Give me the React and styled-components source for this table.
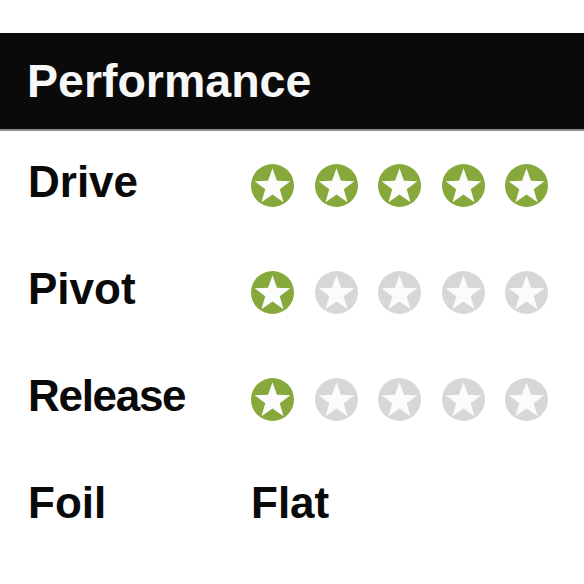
import React from "react";
import styled, { createGlobalStyle } from "styled-components";

const Global = createGlobalStyle`
  html, body { margin: 0; padding: 0; background: #ffffff; }
  body { font-family: "Liberation Sans", Arial, sans-serif; }
`;

const Page = styled.div`
  width: 584px;
  padding-top: 33px;
`;

const Header = styled.header`
  height: 96px;
  background: #0a0a0a;
  border-bottom: 2px solid #8c8c8c;
  display: flex;
  align-items: center;
  padding-left: 27px;
  box-sizing: content-box;
`;

const Title = styled.h1`
  margin: 0;
  color: #f7f7f7;
  font-size: 46.5px;
  font-weight: 700;
  line-height: 1;
  padding-top: 1px;
`;

const Table = styled.div`
  display: grid;
  grid-template-columns: 223px 1fr;
  grid-auto-rows: 107px;
  padding-left: 28px;
`;

const Label = styled.div`
  display: flex;
  align-items: center;
  font-size: 44px;
  font-weight: 700;
  line-height: 1;
  color: #0a0a0a;
  letter-spacing: ${(p) => (p.$tight ? "-1.3px" : "0px")};
  padding-bottom: 5px;
`;

const Value = styled(Label)`
  letter-spacing: 0px;
`;

const Stars = styled.div`
  display: flex;
  align-items: center;
  gap: 20.5px;
  padding-top: 2px;
`;

const StarSvg = styled.svg`
  width: 43px;
  height: 43px;
  flex: none;
  display: block;
`;

const GREEN = "#87a83a";
const GREY = "#d7d7d7";

function starPoints(cx, cy, R, r) {
  const pts = [];
  for (let k = 0; k < 10; k++) {
    const a = ((-90 + k * 36) * Math.PI) / 180;
    const rad = k % 2 === 0 ? R : r;
    pts.push(`${(cx + rad * Math.cos(a)).toFixed(2)},${(cy + rad * Math.sin(a)).toFixed(2)}`);
  }
  return pts.join(" ");
}

const STAR = starPoints(21.5, 23, 18.8, 7.6);

function Star({ on }) {
  return (
    <StarSvg viewBox="0 0 43 43">
      <circle cx="21.5" cy="21.5" r="21.5" fill={on ? GREEN : GREY} />
      <polygon points={STAR} fill="#fbfbfb" />
    </StarSvg>
  );
}

function Rating({ value }) {
  return (
    <Stars>
      {[0, 1, 2, 3, 4].map((i) => (
        <Star key={i} on={i < value} />
      ))}
    </Stars>
  );
}

export default function App() {
  return (
    <Page>
      <Global />
      <Header>
        <Title>Performance</Title>
      </Header>
      <Table>
        <Label>Drive</Label>
        <Rating value={5} />
        <Label>Pivot</Label>
        <Rating value={1} />
        <Label $tight>Release</Label>
        <Rating value={1} />
        <Label>Foil</Label>
        <Value>Flat</Value>
      </Table>
    </Page>
  );
}
